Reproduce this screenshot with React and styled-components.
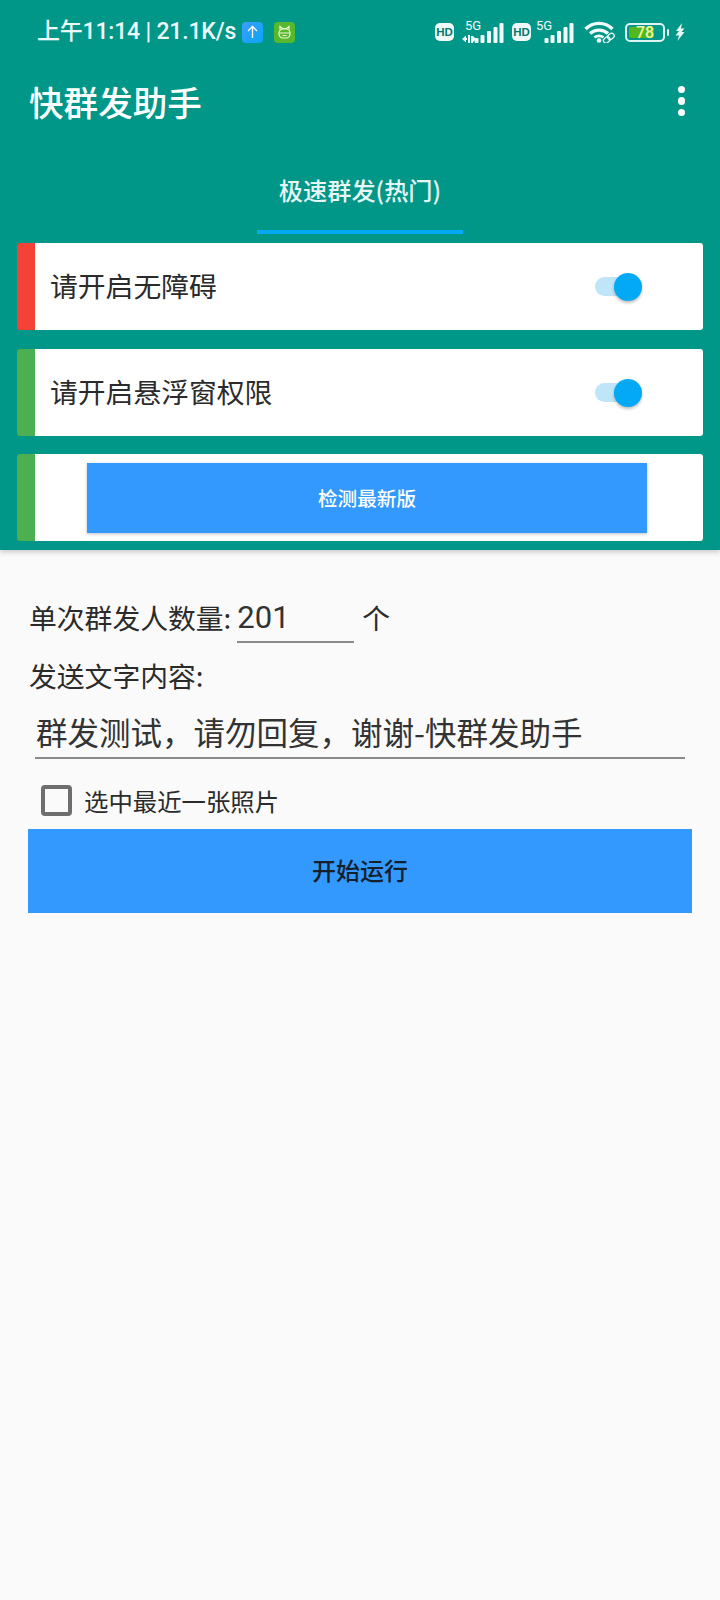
import styled, { createGlobalStyle } from "styled-components";

const GlobalStyle = createGlobalStyle`
  html, body {
    margin: 0;
    padding: 0;
    background: #fafafa;
    font-family: "Noto Sans CJK SC", "Noto Sans", sans-serif;
  }
  * { box-sizing: border-box; }
`;

const Page = styled.div`
  width: 720px;
  height: 1600px;
  background: #fafafa;
  overflow: hidden;
`;

const Header = styled.header`
  height: 550px;
  background: #009688;
  padding-top: 18px;
  box-shadow: 0 2px 5px rgba(0, 0, 0, 0.2);
`;

const StatusBar = styled.div`
  height: 28px;
  display: flex;
  align-items: center;
  padding: 0 35px 0 37px;
  color: #eefaf8;
`;

const StatusText = styled.span`
  font-family: "Roboto", "Noto Sans CJK SC", sans-serif;
  font-size: 23px;
  font-weight: 500;
  letter-spacing: -0.2px;
  line-height: 28px;
  white-space: nowrap;
`;

const AppIcon = styled.div`
  width: 21px;
  height: 21px;
  border-radius: 4px;
  margin-left: ${(p) => p.$gap}px;
  background: ${(p) => p.$bg};
  display: flex;
  align-items: center;
  justify-content: center;
`;

const StatusRight = styled.div`
  margin-left: auto;
  display: flex;
  align-items: center;
`;

const HdBadge = styled.span`
  width: 19px;
  height: 18px;
  border-radius: 5px;
  background: #f0faf8;
  color: #00796b;
  font-family: "Liberation Sans", sans-serif;
  font-size: 11.5px;
  font-weight: 700;
  line-height: 18px;
  text-align: center;
  margin-left: ${(p) => p.$gap}px;
`;

const SignalWrap = styled.div`
  position: relative;
  height: 21px;
  width: ${(p) => p.$width}px;
  margin-left: ${(p) => p.$gap}px;
`;

const FiveG = styled.span`
  position: absolute;
  left: ${(p) => p.$left}px;
  top: -3px;
  font-family: "Roboto", sans-serif;
  font-size: 13px;
  line-height: 14px;
  color: #f0faf8;
`;

const Battery = styled.div`
  width: 40px;
  height: 19px;
  margin-left: 9px;
  border: 2px solid #dff5f1;
  border-radius: 5px;
  padding: 2px;
  position: relative;
`;

const BatteryFill = styled.div`
  height: 100%;
  width: 78%;
  background: #52b81e;
  border-radius: 2px;
`;

const BatteryText = styled.span`
  position: absolute;
  left: 0;
  right: 0;
  top: 0;
  text-align: center;
  font-family: "Roboto", sans-serif;
  font-size: 16px;
  font-weight: 500;
  line-height: 15px;
  color: #eef7a8;
`;

const BatteryNub = styled.div`
  width: 2px;
  height: 7px;
  margin-left: 2px;
  background: #dff5f1;
  border-radius: 1px;
`;

const AppBar = styled.div`
  height: 74px;
  margin-top: 18px;
  display: flex;
  align-items: center;
  justify-content: space-between;
  padding: 0 35px 0 29px;
`;

const Title = styled.h1`
  margin: 0;
  color: #ffffff;
  font-size: 34.6px;
  font-weight: 500;
  line-height: 48px;
`;

const MoreButton = styled.div`
  display: flex;
  flex-direction: column;
  gap: 4px;
`;

const Dot = styled.span`
  width: 7.5px;
  height: 7.5px;
  border-radius: 50%;
  background: #ffffff;
`;

const TabRow = styled.div`
  display: flex;
  justify-content: center;
`;

const Tab = styled.div`
  width: 206px;
  height: 96px;
  padding-top: 16px;
  border-bottom: 4px solid #03a9f4;
  color: #e8f7f5;
  font-size: 24.2px;
  font-weight: 500;
  line-height: 71px;
  text-align: center;
  white-space: nowrap;
`;

const CardList = styled.div`
  margin-top: 9px;
  padding: 0 17px;
  display: flex;
  flex-direction: column;
  gap: 18.5px;
`;

const Card = styled.div`
  height: 87px;
  display: flex;
  align-items: center;
  background: #ffffff;
  border-left: 18px solid ${(p) => p.$stripe};
  border-radius: 3px;
`;

const CardLabel = styled.span`
  margin: 0 0 3px 15px;
  font-size: 27.8px;
  line-height: 40px;
  color: #2b2b2b;
`;

const Switch = styled.div`
  position: relative;
  width: 47px;
  height: 19px;
  margin-left: auto;
  margin-right: 61px;
  border-radius: 10px;
  background: #bfe5f8;
`;

const Thumb = styled.span`
  position: absolute;
  right: 0;
  top: -4px;
  width: 28px;
  height: 28px;
  border-radius: 50%;
  background: #03a9f4;
  box-shadow: 0 2px 3px rgba(0, 0, 0, 0.25);
`;

const UpdateButton = styled.button`
  width: 560px;
  height: 70px;
  margin-left: 52px;
  padding-left: 6px;
  border: 0;
  background: #3399ff;
  color: #ffffff;
  font-family: inherit;
  font-size: 19.6px;
  font-weight: 500;
  box-shadow: 0 1px 3px rgba(0, 0, 0, 0.25);
`;

const Form = styled.main`
  padding: 44px 28px 0;
`;

const CountRow = styled.div`
  height: 58px;
  display: flex;
  align-items: flex-start;
  padding-left: 1px;
`;

const FormText = styled.span`
  font-size: 27.8px;
  line-height: 46px;
  color: #2b2b2b;
`;

const CountInput = styled.input`
  width: 117px;
  height: 49px;
  margin: 0 8px 0 6px;
  padding: 0;
  border: 0;
  border-bottom: 2px solid #8a8a8a;
  outline: none;
  background: transparent;
  font-family: "Roboto", sans-serif;
  font-size: 31px;
  color: #333333;
`;

const ContentLabel = styled.div`
  padding-left: 1px;
  font-size: 27.8px;
  line-height: 40px;
  margin-top: 3px;
  color: #2b2b2b;
`;

const ContentInput = styled.input`
  display: block;
  width: 650px;
  height: 64px;
  margin: 0 0 0 7px;
  padding: 10px 0 0 1px;
  border: 0;
  border-bottom: 2px solid #8a8a8a;
  outline: none;
  background: transparent;
  font-family: "Noto Sans CJK SC", sans-serif;
  font-size: 31.5px;
  color: #333333;
`;

const CheckRow = styled.label`
  height: 70px;
  display: flex;
  align-items: center;
  padding: 13px 0 0 13px;
`;

const CheckBox = styled.span`
  width: 31px;
  height: 31px;
  border: 4px solid #6e6e6e;
  border-radius: 4px;
`;

const CheckLabel = styled.span`
  margin-left: 12px;
  font-size: 24.4px;
  line-height: 34px;
  color: #2b2b2b;
`;

const RunButton = styled.button`
  display: block;
  width: 664px;
  height: 84px;
  padding: 0 0 4px;
  border: 0;
  background: #3399ff;
  color: #15202b;
  font-family: inherit;
  font-size: 24px;
  font-weight: 500;
`;

const SignalBars = ({ arrows }) => (
  <svg
    width={arrows ? 42 : 30}
    height="20"
    viewBox={arrows ? "0 0 42 20" : "0 0 30 20"}
    style={{ position: "absolute", right: 0, bottom: 0 }}
    fill="#f0faf8"
  >
    {arrows && <path d="M0 16l4-3.500v2.500h1v2H4v2.500zM6 12h2v8H6zM9 13h2v7H9zM11 13l3 3-3 3z" />}
    <g transform={arrows ? "translate(12 0)" : "translate(0 0)"}>
      <rect x="0.5" y="15" width="4" height="5" rx="1" />
      <rect x="6.500" y="12" width="4" height="8" rx="1" />
      <rect x="13" y="8" width="4" height="12" rx="1" />
      <rect x="19.500" y="4" width="4" height="16" rx="1" />
      <rect x="25.500" y="0" width="4" height="20" rx="1" />
    </g>
  </svg>
);

const App = () => (
  <Page>
    <GlobalStyle />
    <Header>
      <StatusBar>
        <StatusText>上午11:14 | 21.1K/s</StatusText>
        <AppIcon $bg="linear-gradient(135deg, #3f9dff, #06a6f2)" $gap={6}>
          <svg width="13" height="14" viewBox="0 0 13 14" fill="none" stroke="#fff" strokeWidth="1.3">
            <path d="M6.5 13V1.500M2 6l4.500-4.500L11 6" />
          </svg>
        </AppIcon>
        <AppIcon $bg="#56b82c" $gap={11}>
          <svg width="15" height="15" viewBox="0 0 15 15" fill="none" stroke="#f3f7da" strokeWidth="1.2">
            <path d="M3 4.500V1.500l2.500 2h4l2.500-2v3" />
            <rect x="2" y="4" width="11" height="9" rx="4" />
            <path d="M2.500 8h10M5.500 10.500h4" />
          </svg>
        </AppIcon>
        <StatusRight>
          <HdBadge $gap={0}>HD</HdBadge>
          <SignalWrap $width={42} $gap={8}>
            <FiveG $left={3}>5G</FiveG>
            <SignalBars arrows />
          </SignalWrap>
          <HdBadge $gap={8}>HD</HdBadge>
          <SignalWrap $width={38} $gap={5}>
            <FiveG $left={0}>5G</FiveG>
            <SignalBars />
          </SignalWrap>
          <svg width="32" height="22" viewBox="0 0 32 22" style={{ marginLeft: 10 }} fill="none">
            <path d="M1.500 8C9 0.500 21 0.500 28.500 8" stroke="#f0faf8" strokeWidth="3.400" />
            <path d="M6 12.500c5-4.500 13-4.500 18 0" stroke="#f0faf8" strokeWidth="3.400" />
            <path d="M10.500 16.500c2.500-2.200 6.500-2.200 9 0" stroke="#f0faf8" strokeWidth="2.600" />
            <circle cx="15" cy="19.500" r="2.300" fill="#f0faf8" />
            <g transform="rotate(-40 25 17)" stroke="#f0faf8" strokeWidth="1.300">
              <rect x="18.500" y="14.500" width="7" height="5" rx="2.500" fill="#009688" />
              <rect x="24" y="14.500" width="7" height="5" rx="2.500" />
            </g>
          </svg>
          <Battery>
            <BatteryFill />
            <BatteryText>78</BatteryText>
          </Battery>
          <BatteryNub />
          <svg width="10" height="18" viewBox="0 0 10 18" style={{ marginLeft: 6 }} fill="#e9f5f0">
            <path d="M7 0L1 8h3L0.500 12.500h3.500L2.500 18 9.500 9H6.500l3-3.500H6z" />
          </svg>
        </StatusRight>
      </StatusBar>
      <AppBar>
        <Title>快群发助手</Title>
        <MoreButton>
          <Dot />
          <Dot />
          <Dot />
        </MoreButton>
      </AppBar>
      <TabRow>
        <Tab>极速群发(热门)</Tab>
      </TabRow>
      <CardList>
        <Card $stripe="#f44336">
          <CardLabel>请开启无障碍</CardLabel>
          <Switch>
            <Thumb />
          </Switch>
        </Card>
        <Card $stripe="#4caf50">
          <CardLabel>请开启悬浮窗权限</CardLabel>
          <Switch>
            <Thumb />
          </Switch>
        </Card>
        <Card $stripe="#4caf50">
          <UpdateButton>检测最新版</UpdateButton>
        </Card>
      </CardList>
    </Header>
    <Form>
      <CountRow>
        <FormText>单次群发人数量:</FormText>
        <CountInput defaultValue="201" />
        <FormText>个</FormText>
      </CountRow>
      <ContentLabel>发送文字内容:</ContentLabel>
      <ContentInput defaultValue="群发测试，请勿回复，谢谢-快群发助手" />
      <CheckRow>
        <CheckBox />
        <CheckLabel>选中最近一张照片</CheckLabel>
      </CheckRow>
      <RunButton>开始运行</RunButton>
    </Form>
  </Page>
);

export default App;
